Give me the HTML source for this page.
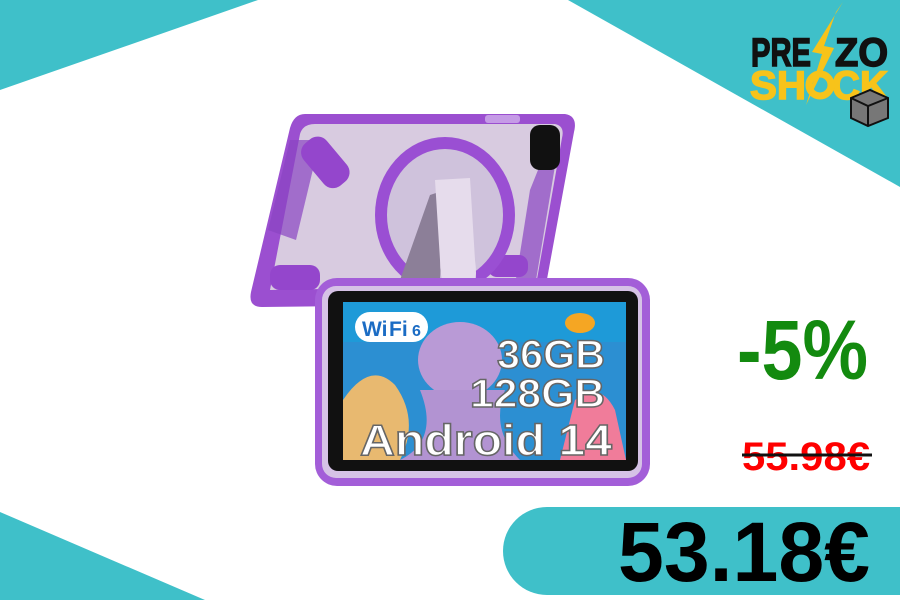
<!DOCTYPE html>
<html><head><meta charset="utf-8"><style>
body{margin:0;width:900px;height:600px;overflow:hidden;background:#fff;font-family:"Liberation Sans",sans-serif}
</style></head><body>
<svg width="900" height="600" viewBox="0 0 900 600" xmlns="http://www.w3.org/2000/svg" style="position:absolute;left:0;top:0">
<polygon points="0,0 258,0 0,90" fill="#3fc0c9"/>
<polygon points="568,0 900,0 900,187" fill="#3fc0c9"/>
<polygon points="0,512 205,600 0,600" fill="#3fc0c9"/>
<rect x="503" y="507" width="460" height="88" rx="44" fill="#3fc0c9"/>
<!-- back tablet -->
<path d="M305,114 L565,114 Q578,116 574,132 L545,290 Q541,304 525,304 L262,307 Q248,307 251,292 L290,128 Q294,114 305,114Z" fill="#9b4fd0"/>
<path d="M315,124 L555,124 Q565,126 562,138 L536,285 L270,290 L300,134 Q303,124 315,124Z" fill="#d8cbe0"/>
<path d="M268,230 L290,140 L320,140 L296,240Z" fill="#8a45c2" opacity=".7"/>
<path d="M530,190 L550,140 L556,160 L536,280 L515,285Z" fill="#8a45c2" opacity=".7"/>
<rect x="310" y="135" width="30" height="55" rx="12" fill="#9446cc" transform="rotate(-40 325 162)"/>
<rect x="270" y="265" width="50" height="25" rx="10" fill="#9446cc"/>
<rect x="488" y="255" width="40" height="22" rx="9" fill="#9446cc"/>
<rect x="530" y="125" width="30" height="45" rx="10" fill="#111"/>
<ellipse cx="445" cy="215" rx="70" ry="78" fill="#9a4fd3"/>
<ellipse cx="445" cy="215" rx="58" ry="66" fill="#cfc2dc"/>
<path d="M400,280 L430,195 L445,190 L440,280Z" fill="#8c7f98"/>
<path d="M435,180 L470,178 L475,260 Q480,295 460,305 L455,305 Q440,290 440,260Z" fill="#e6dcec"/>
<rect x="485" y="115" width="35" height="8" rx="3" fill="#c59be6"/>
<!-- front tablet -->
<rect x="315" y="278" width="335" height="208" rx="22" fill="#a35ed8"/>
<rect x="322" y="286" width="320" height="192" rx="14" fill="#d6c2e6"/>
<rect x="328" y="291" width="310" height="180" rx="10" fill="#111"/>
<rect x="343" y="302" width="283" height="158" fill="#2c8fd2"/>
<rect x="343" y="302" width="283" height="40" fill="#1e9ad8"/>
<ellipse cx="460" cy="360" rx="42" ry="38" fill="#b99ad6"/>
<path d="M420,390 Q440,440 400,460 L520,460 Q490,430 505,390Z" fill="#b293d2"/>
<path d="M343,400 Q370,360 395,385 Q420,420 400,460 L343,460Z" fill="#e8b970"/>
<path d="M575,400 Q600,380 615,410 L626,460 L560,460Z" fill="#f07c9a"/>
<ellipse cx="580" cy="323" rx="15" ry="10" fill="#f5a623"/>
<rect x="355" y="312" width="73" height="30" rx="15" fill="#fff"/>
<text x="362" y="336" font-size="21" font-weight="700" fill="#1b6cc4">Wi</text>
<text x="389" y="336" font-size="21" font-weight="700" fill="#1b6cc4">Fi</text>
<text x="412" y="336" font-size="16" font-weight="700" fill="#1b6cc4">6</text>
<g font-weight="700" fill="#fff" stroke="#666" stroke-width="1.5" lengthAdjust="spacingAndGlyphs">
<text x="497" y="368" font-size="40" textLength="108" lengthAdjust="spacingAndGlyphs">36GB</text>
<text x="470" y="407" font-size="40" textLength="135" lengthAdjust="spacingAndGlyphs">128GB</text>
<text x="360" y="455" font-size="44" textLength="252" lengthAdjust="spacingAndGlyphs">Android 14</text>
</g>
<!-- logo -->
<text x="751" y="66" font-size="40" font-weight="700" fill="#111" stroke="#111" stroke-width="1.5" textLength="60" lengthAdjust="spacingAndGlyphs">PRE</text>
<text x="835" y="66" font-size="40" font-weight="700" fill="#111" stroke="#111" stroke-width="1.5" textLength="53" lengthAdjust="spacingAndGlyphs">ZO</text>
<text x="750" y="99" font-size="40" font-weight="700" fill="#f7c31a" stroke="#f7c31a" stroke-width="1.5" textLength="56" lengthAdjust="spacingAndGlyphs">SH</text>
<text x="832" y="99" font-size="40" font-weight="700" fill="#f7c31a" stroke="#f7c31a" stroke-width="1.5" textLength="56" lengthAdjust="spacingAndGlyphs">CK</text>
<polygon points="843,2 812,52 822,54 806,105 834,48 824,46 836,12" fill="#f7c31a"/>
<circle cx="820" cy="85" r="11" fill="none" stroke="#f7c31a" stroke-width="7"/>
<polygon points="851,98 870,90 888,98 888,118 868,126 851,118" fill="#777" stroke="#111" stroke-width="2"/>
<polyline points="851,98 868,106 888,98" fill="none" stroke="#111" stroke-width="2"/>
<line x1="868" y1="106" x2="868" y2="126" stroke="#111" stroke-width="2"/>
<!-- prices -->
<text x="737" y="379" font-size="84" font-weight="700" fill="#138a0f" textLength="131" lengthAdjust="spacingAndGlyphs">-5%</text>
<text x="742" y="470" font-size="40" font-weight="700" fill="#f00" textLength="128" lengthAdjust="spacingAndGlyphs">55.98€</text>
<line x1="742" y1="455" x2="872" y2="455" stroke="#111" stroke-width="3"/>
<text x="618" y="581" font-size="84" font-weight="700" fill="#000" textLength="252" lengthAdjust="spacingAndGlyphs">53.18€</text>
</svg>
</body></html>
